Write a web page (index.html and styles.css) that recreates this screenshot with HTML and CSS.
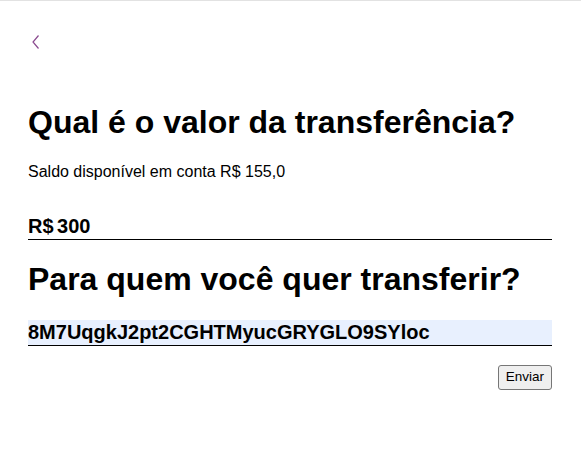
FILE: index.html
```html
<!DOCTYPE html>
<html lang="pt-BR">
<head>
<meta charset="utf-8">
<title>Transferência</title>
<link rel="stylesheet" href="styles.css">
</head>
<body>
<div class="topbar"></div>
<main class="page">
  <a class="back" href="#" aria-label="Voltar">
    <svg width="8" height="14" viewBox="0 0 8 14"><path d="M6.5 0.5 L1 7 L6.5 13.5" fill="none" stroke="#8a4a8f" stroke-width="1.2"/></svg>
  </a>
  <h1 class="title first">Qual é o valor da transferência?</h1>
  <p class="saldo">Saldo disponível em conta R$ 155,0</p>
  <div class="field amount">R$ 300</div>
  <h1 class="title second">Para quem você quer transferir?</h1>
  <div class="field key">8M7UqgkJ2pt2CGHTMyucGRYGLO9SYloc</div>
  <div class="actions"><button class="btn">Enviar</button></div>
</main>
</body>
</html>
```
FILE: styles.css
```css
html, body { margin: 0; padding: 0; background: #fff; }
body { font-family: "Liberation Sans", Arial, sans-serif; color: #000; }
.topbar { height: 1px; background: #e2e2e2; }
.page { padding: 0 29px 0 28px; display: flex; flex-direction: column; }
.back { display: block; width: 8px; height: 14px; margin: 34px 0 0 4px; }
.back svg { display: block; }
.title { font-size: 32px; font-weight: bold; margin: 0; line-height: 37px; }
.first { margin-top: 55px; }
.saldo { font-size: 16px; margin: 22px 0 0; line-height: 18px; }
.field { font-size: 20px; font-weight: bold; border-bottom: 1px solid #000; line-height: 23px; padding: 1px 0; }
.amount { margin-top: 33px; word-spacing: -2px; }
.second { margin-top: 21px; }
.key { background: #e8f0fe; margin-top: 22px; }
.actions { display: flex; justify-content: flex-end; margin-top: 19px; }
.btn { font-family: "Liberation Sans", Arial, sans-serif; font-size: 13.5px; line-height: 14px; padding: 4px 7px 5px; background: #efefef; border: 1px solid #767676; border-radius: 3px; color: #000; }
```
